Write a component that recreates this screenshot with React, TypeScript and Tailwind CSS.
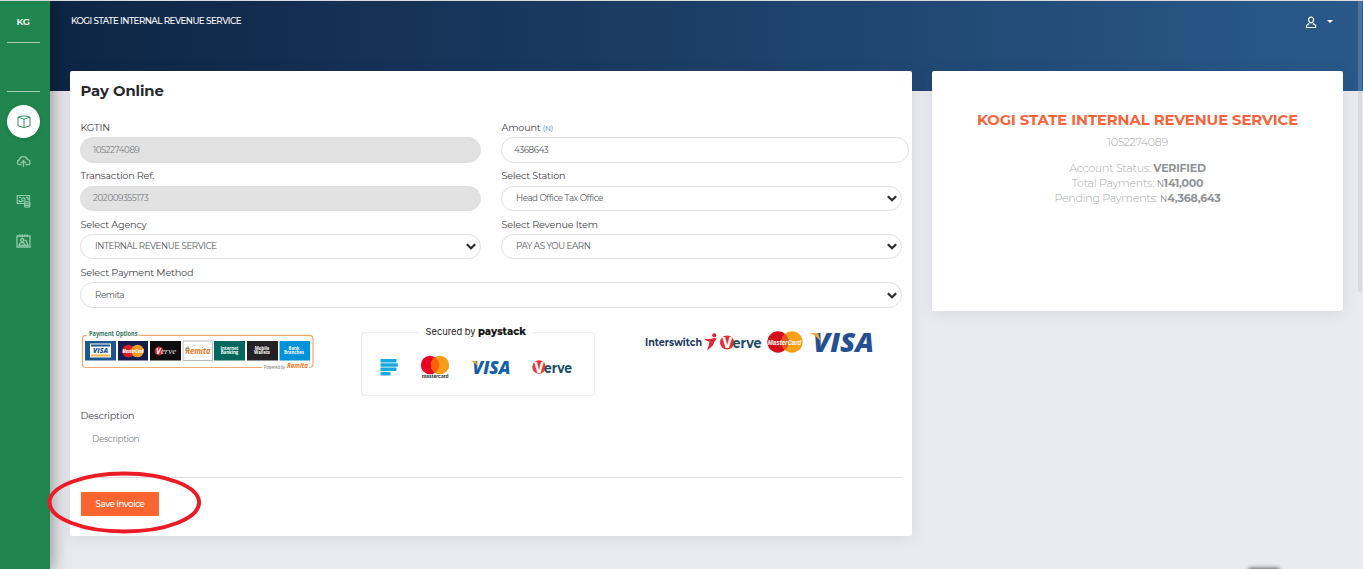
import type { ReactNode } from "react";

function Chevron() {
  return (
    <svg className="h-[7px] w-[10px] shrink-0" viewBox="0 0 10 7" fill="none" stroke="#2b2b2b" strokeWidth="2.2">
      <path d="M.8 1.200 5 5.200 9.200 1.200" />
    </svg>
  );
}

function Label({ children, leading = "leading-[19px]" }: { children: ReactNode; leading?: string }) {
  return (
    <label className={`block h-[19px] whitespace-nowrap pl-[0.5px] text-[9.7px] tracking-[-0.21px] text-[#3f4348] ${leading}`}>
      {children}
    </label>
  );
}

function Field({ label, value, kind, size, leading }: { label: ReactNode; value: string; kind: "disabled" | "input" | "select"; size: string; leading?: string }) {
  const tone =
    kind === "disabled"
      ? "border-[#e0e0e0] bg-[#e2e2e2] pl-3 text-[#7d8084]"
      : kind === "input"
        ? "border-[#dfe1e3] bg-white pl-3 text-[#54585c]"
        : "border-[#dfe1e3] bg-white pl-[14px] pr-1 text-[#54585c]";
  return (
    <div>
      <Label leading={leading}>{label}</Label>
      <div className={`flex items-center justify-between rounded-full border text-[8.7px] tracking-[-0.4px] ${tone} ${size}`}>
        <span className="whitespace-nowrap pt-px">{value}</span>
        {kind === "select" && <Chevron />}
      </div>
    </div>
  );
}

function Sidebar() {
  return (
    <aside className="z-10 flex w-[50px] shrink-0 flex-col items-center bg-[#20854e] pr-[3px] shadow-[0_0_18px_2px_rgba(0,0,0,0.4)]">
      <div className="mt-[15px] h-3 pr-px text-[9.3px] font-semibold leading-3 tracking-[-0.03em] text-white">KG</div>
      <div className="mt-[14px] h-px w-[33px] bg-[#a2cdb5]" />
      <div className="mt-12 h-px w-[33px] bg-[#a2cdb5]" />
      <div className="mt-[13px] flex size-[33px] items-center justify-center rounded-full bg-white shadow-[0_1px_4px_rgba(0,0,0,0.12)]">
        <svg className="size-[14px]" viewBox="0 0 14 14" fill="none" stroke="#20854e" strokeWidth="0.9" strokeLinejoin="round">
          <path d="M7 .8 13 2.200V10.800L7 12.700 1 10.800V2.200ZM1 2.200 7 4.100 13 2.200M7 4.100V12.700" />
        </svg>
      </div>
      <svg className="mt-[17px] h-[14px] w-[15px]" viewBox="0 0 15 14" fill="none" stroke="#93c9aa" strokeWidth="1.300">
        <path d="M5.500 9.700H3.500A2.400 2.400 0 0 1 3.200 5 4.300 4.300 0 0 1 11.500 4.700a2.500 2.500 0 0 1 .1 5H9.500M7.500 12V6M4.800 8.400 7.500 5.700l2.700 2.700" />
      </svg>
      <svg className="mt-[25px] h-[14px] w-[15px]" viewBox="0 0 15 14" fill="none" stroke="#93c9aa" strokeWidth="1.200">
        <path d="M8 9.500H1.200V1.500H13.500V7M3.200 6V7.700H6M3 3.400H5M10 3.400H11.800V6" />
        <circle cx="7.400" cy="5.500" r="1.700" />
        <ellipse cx="11.200" cy="8.800" rx="2.600" ry="1.100" />
        <path d="M8.600 8.800v3.400c0 1.400 5.200 1.400 5.200 0V8.800M8.600 10.600c0 1.400 5.200 1.400 5.200 0" />
      </svg>
      <svg className="mt-[26px] h-[14px] w-[15px]" viewBox="0 0 15 14" fill="none" stroke="#93c9aa" strokeWidth="1.300">
        <path d="M1 2H14V13H1ZM4 .3v3M6.400 .3v3M8.800 .3v3M11.200 .3v3" />
        <circle cx="6.200" cy="6" r="1.500" />
        <path d="M3.200 11.300c.4-4 4.600-4 6 0ZM8.500 6.500h1.600l1.800 4.800h-2.500" />
      </svg>
    </aside>
  );
}

function RemitaOptions() {
  return (
    <svg className="h-[50px] w-[240px] font-['Open_Sans',sans-serif]" viewBox="78 323 240 50" fill="none">
      <path d="M87 335.300H86Q82.500 335.300 82.500 339V364Q82.500 367.500 86 367.500H262M138.500 335.300H309Q313 335.300 313 339V364Q313 367.500 309 367.500" stroke="#f2a871" strokeWidth="1.200" />
      <text x="89" y="336" fontSize="6.200" fontWeight="700" fill="#337663" textLength="48.500" lengthAdjust="spacingAndGlyphs">Payment Options</text>
      <rect x="85" y="341" width="31" height="19.500" fill="#1c568d" />
      <rect x="90" y="343.500" width="21" height="14" fill="#fff" />
      <path d="M91 344.500h19v2H91z" fill="#1c568d" />
      <path d="M91 354.500h19v2H91z" fill="#efb548" />
      <text x="93" y="353.300" fontSize="7" fontWeight="800" fontStyle="italic" fill="#17518b" textLength="15" lengthAdjust="spacingAndGlyphs">VISA</text>
      <rect x="118" y="341" width="30" height="19.500" fill="#141d4d" />
      <circle cx="128.500" cy="351" r="6.300" fill="#d71f2b" />
      <circle cx="137.500" cy="351" r="6.300" fill="#f39c26" />
      <text x="122.500" y="353" fontSize="5.500" fontWeight="800" fontStyle="italic" fill="#fff" textLength="21" lengthAdjust="spacingAndGlyphs">MasterCard</text>
      <rect x="150" y="341" width="31" height="19.500" fill="#0d0d0f" />
      <circle cx="159" cy="351" r="4.400" fill="#df2026" />
      <text x="156" y="354" fontSize="8" fontWeight="700" fontStyle="italic" fill="#fff">V</text>
      <text x="161" y="354" fontFamily="'Liberation Serif', serif" fontSize="8" fontStyle="italic" fill="#e3e3e3" textLength="15" lengthAdjust="spacingAndGlyphs">erve</text>
      <rect x="183" y="341" width="29.500" height="19.500" fill="#fff" stroke="#aaa" strokeWidth=".8" />
      <text x="185.500" y="353.800" fontSize="8" fontWeight="700" fontStyle="italic" fill="#ec7722" textLength="25" lengthAdjust="spacingAndGlyphs">Remita</text>
      <path d="M186 351q-1-4 3-4" stroke="#4b946b" strokeWidth="1" />
      <rect x="214" y="341" width="31" height="19.500" fill="#00685c" />
      <rect x="247" y="341" width="31" height="19.500" fill="#242124" />
      <rect x="279.500" y="341" width="30.500" height="19.500" fill="#0093d8" />
      <g fontSize="4.300" fontWeight="700" fill="#fff" textAnchor="middle">
        <text x="229.500" y="349.500">Internet</text><text x="229.500" y="354">Banking</text>
        <text x="262" y="349.500">Mobile</text><text x="262" y="354">Wallets</text>
        <text x="294" y="349.500">Bank</text><text x="294" y="354">Branches</text>
      </g>
      <text x="264" y="368.500" fontSize="4.500" fill="#666" textLength="21" lengthAdjust="spacingAndGlyphs">Powered by</text>
      <text x="287" y="368.300" fontSize="6.800" fontWeight="700" fontStyle="italic" fill="#ec7722" textLength="21" lengthAdjust="spacingAndGlyphs">Remita</text>
    </svg>
  );
}

function PaystackOptions() {
  return (
    <svg className="h-[75px] w-[236px] font-[Inter,sans-serif]" viewBox="360 323 236 75" fill="none">
      <path d="M419 332.500H365Q361.500 332.500 361.500 336V392Q361.500 395.500 365 395.500H591Q594.500 395.500 594.500 392V336Q594.500 332.500 591 332.500H532" stroke="#eaeaea" />
      <text x="425.500" y="335.300" fontSize="9.300" fill="#222" textLength="50">Secured by</text>
      <text x="478" y="335" fontFamily="Montserrat, sans-serif" fontSize="10" fontWeight="800" fill="#171717" textLength="48" lengthAdjust="spacingAndGlyphs">paystack</text>
      <g fill="#19a9df">
        <rect x="380.500" y="359" width="16" height="3.400" rx=".5" /><rect x="380.500" y="363.300" width="17.300" height="3.400" rx=".5" />
        <rect x="380.500" y="367.600" width="16" height="3.400" rx=".5" /><rect x="380.500" y="372" width="10" height="3.400" rx=".5" />
      </g>
      <circle cx="430" cy="365" r="9.200" fill="#e90423" />
      <circle cx="440" cy="365" r="9.200" fill="#f79d1c" />
      <path d="M435 357.300a9.200 9.200 0 0 1 0 15.400 9.200 9.200 0 0 1 0-15.400" fill="#ff6005" />
      <text x="422" y="378.400" fontSize="4.700" fontWeight="700" fill="#282828" textLength="26.500" lengthAdjust="spacingAndGlyphs">mastercard</text>
      <text x="472.500" y="373.800" fontFamily="'Open Sans', sans-serif" fontSize="18.300" fontWeight="800" fontStyle="italic" fill="#1261a8" textLength="38" lengthAdjust="spacingAndGlyphs">VISA</text>
      <path d="M470.500 361H476L478 367Q475 362 470.500 361" fill="#f7a51c" />
      <circle cx="539" cy="367" r="6.700" fill="#ed3434" />
      <text x="534" y="372.500" fontSize="14" fontWeight="800" fill="#fff" textLength="10" lengthAdjust="spacingAndGlyphs">V</text>
      <text x="544" y="372.500" fontFamily="Montserrat, sans-serif" fontSize="13.500" fontWeight="700" fill="#174b64" textLength="28" lengthAdjust="spacingAndGlyphs">erve</text>
    </svg>
  );
}

function InterswitchOptions() {
  return (
    <svg className="h-[46px] w-[240px] font-['Open_Sans',sans-serif]" viewBox="642 318 240 46" fill="none">
      <text x="645" y="346.300" fontFamily="Montserrat, sans-serif" fontSize="10.500" fontWeight="700" fill="#213a61" textLength="57" lengthAdjust="spacingAndGlyphs">Interswitch</text>
      <circle cx="714.200" cy="335.300" r="2.100" fill="#df2938" />
      <path d="M704 338.700Q710 339.500 714 338L716.800 338.500Q714 342 712.800 345.500L707 350.700Q709.300 345 709.500 341.600Q706 341 704 338.700Z" fill="#df2938" />
      <circle cx="727" cy="342.500" r="7" fill="#e42b2d" />
      <text x="722" y="348" fontFamily="Inter, sans-serif" fontSize="14" fontWeight="800" fill="#fff" textLength="10.500" lengthAdjust="spacingAndGlyphs">V</text>
      <text x="732.500" y="347.800" fontFamily="Montserrat, sans-serif" fontSize="13.500" fontWeight="700" fill="#174b64" textLength="29" lengthAdjust="spacingAndGlyphs">erve</text>
      <circle cx="778" cy="342" r="10.700" fill="#d20f1a" />
      <circle cx="792" cy="342" r="10.700" fill="#f9a019" />
      <path d="M785 333.800a10.700 10.700 0 0 1 0 16.400 10.700 10.700 0 0 1 0-16.400" fill="#e55317" />
      <text x="767.800" y="345.200" fontFamily="'Liberation Sans', sans-serif" fontSize="8" fontWeight="700" fontStyle="italic" fill="#fff" textLength="33.500" lengthAdjust="spacingAndGlyphs">MasterCard</text>
      <text x="813" y="351.700" fontSize="26.500" fontWeight="800" fontStyle="italic" fill="#254f91" textLength="61" lengthAdjust="spacingAndGlyphs">VISA</text>
      <path d="M809.500 333H818L821 342Q816 335 809.500 333" fill="#f1a43b" />
    </svg>
  );
}

export default function App() {
  return (
    <div className="relative h-[569px] w-[1363px] overflow-hidden border-t border-[#d9dcdf] bg-[#eaebf0] font-[Montserrat,Inter,sans-serif]">
      <div className="flex h-full">
        <Sidebar />
        <div className="min-w-0 grow">
          <header className="flex h-[90px] items-start justify-between bg-[linear-gradient(90deg,#0d2645_0%,#122c4e_15%,#285685_92%,#295889_100%)] pl-[21px] pr-[30px] text-white">
            <div className="mt-[14px] whitespace-nowrap text-[8.8px] font-medium leading-3 tracking-[-0.54px]">
              KOGI STATE INTERNAL REVENUE SERVICE
            </div>
            <div className="mt-[15px] flex gap-[10px]">
              <svg className="h-[13px] w-3" viewBox="0 0 12 13" fill="none" stroke="white" strokeWidth="1.200">
                <path d="M3.700 4.400a2.500 2.500 0 1 1 4.800 0c-.3 1.400-1.200 2.500-2.400 2.500S4 5.800 3.700 4.400ZM4.300 7.600 2.300 8.600Q1.300 9.400 1.500 11.500H10.700Q10.900 9.400 9.900 8.600L7.900 7.600" />
              </svg>
              <svg className="mt-1 h-[3px] w-[6px]" viewBox="0 0 6 3"><path d="M0 0H6L3 3Z" fill="white" /></svg>
            </div>
          </header>
          <main className="-mt-5 flex items-start gap-5 pl-5">
            <section className="h-[465px] w-[842px] rounded-[2px] bg-white px-[10px] pt-[11px] shadow-[0_2px_16px_rgba(40,45,75,0.1)]">
              <h1 className="h-[18px] pl-[0.5px] text-[14.8px] font-bold leading-[18px] tracking-[-0.05px] text-[#25282c]">Pay Online</h1>
              <div className="mt-[18px] grid grid-cols-[401px_401px] gap-x-5 gap-y-1">
                <Field label="KGTIN" value="1052274089" kind="disabled" size="h-[26px]" />
                <Field label={<>Amount <span className="text-[7.200px] text-[#4386bd]">(N)</span></>} value="4368643" kind="input" size="h-[26px] w-[408px]" />
                <Field label="Transaction Ref." value="202009355173" kind="disabled" size="h-[25px]" leading="leading-[18px]" />
                <Field label="Select Station" value="Head Office Tax Office" kind="select" size="h-[25px]" leading="leading-[18px]" />
                <Field label="Select Agency" value="INTERNAL REVENUE SERVICE" kind="select" size="h-[25px]" />
                <Field label="Select Revenue Item" value="PAY AS YOU EARN" kind="select" size="h-[25px]" />
                <div className="col-span-2">
                  <Field label="Select Payment Method" value="Remita" kind="select" size="h-[26px]" />
                </div>
              </div>
              <div className="-ml-[2px] mt-[15px] flex h-[83px] w-[810px] items-start">
                <RemitaOptions />
                <div className="ml-[42px]"><PaystackOptions /></div>
                <div className="-mt-[5px] ml-[46px]"><InterswitchOptions /></div>
              </div>
              <Label>Description</Label>
              <div className="ml-3 mt-2 h-3 text-[8.8px] leading-3 tracking-[-0.35px] text-[#818589]">Description</div>
              <hr className="mt-8 border-[#dedfe2]" />
              <button className="ml-px mt-[14px] block h-6 w-[78px] rounded-[1px] bg-[#fb6532] text-[8.800px] font-medium leading-6 tracking-[-0.5px] text-white">Save Invoice</button>
            </section>
            <section className="h-[240px] w-[411px] rounded-[2px] bg-white pt-10 text-center text-[11px] font-light leading-[15px] tracking-[-0.23px] text-[#a7a9ac] shadow-[0_2px_16px_rgba(40,45,75,0.1)]">
              <h2 className="h-[18px] whitespace-nowrap text-[14.8px] font-bold leading-[18px] tracking-[-0.09px] text-[#f9633b]">KOGI STATE INTERNAL REVENUE SERVICE</h2>
              <p className="mt-[6px]">1052274089</p>
              <p className="mt-[11px]">Account Status: <b className="font-bold text-[#909396]">VERIFIED</b></p>
              <p>Total Payments: <b className="font-bold text-[#909396]"><span className="text-[9px] font-normal">N</span>141,000</b></p>
              <p>Pending Payments: <b className="font-bold text-[#909396]"><span className="text-[9px] font-normal">N</span>4,368,643</b></p>
            </section>
          </main>
        </div>
      </div>
      <div className="absolute right-[1px] top-0 h-[291px] w-1 rounded-b bg-[#a9afb8]/30" />
      <svg className="absolute left-[46px] top-[469px] z-20 h-[66px] w-[158px]" viewBox="46 470 158 66" fill="none">
        <ellipse cx="124.300" cy="502.500" rx="74.800" ry="29" stroke="#eb1c25" strokeWidth="4" />
      </svg>
      <div className="absolute -bottom-1 left-[1248px] h-[5px] w-8 rounded-full bg-black/60 blur-[2px]" />
    </div>
  );
}
